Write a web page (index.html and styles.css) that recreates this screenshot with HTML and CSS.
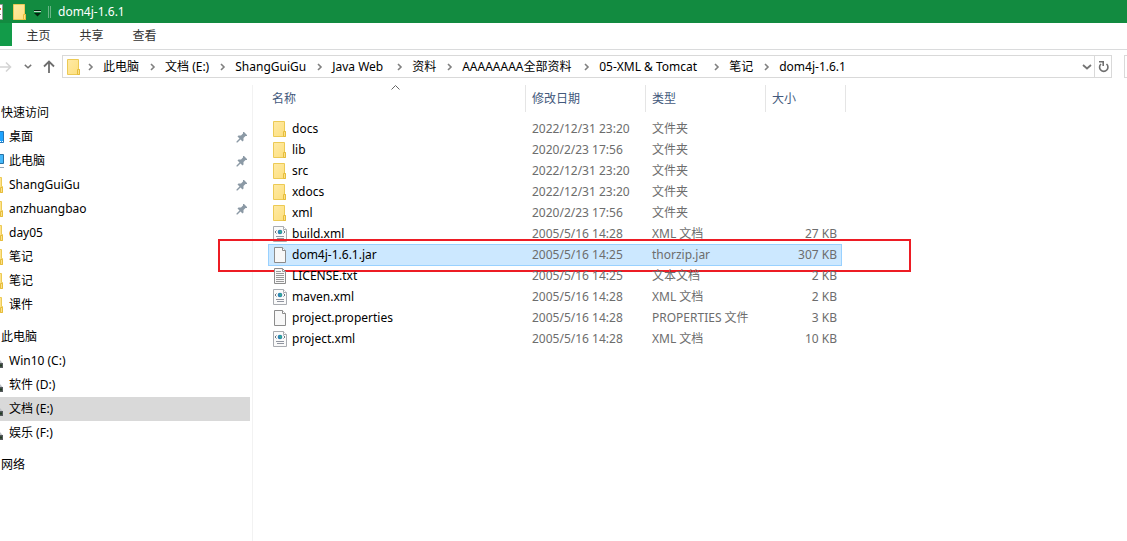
FILE: index.html
```html
<!DOCTYPE html>
<html lang="zh-CN">
<head>
<meta charset="utf-8">
<title>dom4j-1.6.1</title>
<link rel="stylesheet" href="styles.css">
</head>
<body>
<svg class="defs" aria-hidden="true">
  <defs>
    <linearGradient id="fold" x1="0" y1="0" x2="1" y2="1"><stop offset="0" stop-color="#ffeaa5"/><stop offset="1" stop-color="#fddf7d"/></linearGradient>
    <symbol id="folder" viewBox="0 0 16 16"><path d="M1.500.5h11v10h1v5h-12z" fill="url(#fold)" stroke="#ecca55"/><path d="M11.500 15.500v-5h2v5z" fill="#fbe08a" stroke="#e6bd3c"/></symbol>
    <symbol id="page" viewBox="0 0 16 16"><path d="M2.500.5h8l3 3v12h-11z" fill="#f8f8f8" stroke="#8c8c8c"/><path d="M10.500.5v3h3" fill="#fff" stroke="#8c8c8c"/></symbol>
    <symbol id="text" viewBox="0 0 16 16"><path d="M2.500.5h8l3 3v12h-11z" fill="#f8f8f8" stroke="#8c8c8c"/><path d="M10.500.5v3h3M4 3.500h5M4 5.500h8M4 7.500h8M4 9.500h8M4 11.500h8M4 13.500h8" fill="none" stroke="#999"/></symbol>
    <symbol id="xml" viewBox="0 0 16 16"><path d="M1.500.5h10l3 3v12h-13z" fill="#fafafa" stroke="#a8abb0"/><path d="M11.500.5v3h3" fill="#fff" stroke="#a8abb0"/><circle cx="8" cy="6" r="2.300" fill="#2b7fb5"/><path d="M7 5l2-.6.8 1.400L8.500 7.800z" fill="#35b08a"/><path d="M4.500 4.500L3 6l1.500 1.500M11.500 4.500L13 6l-1.500 1.500" fill="none" stroke="#6c7680"/><path d="M4 10.500h8M5 12.500h7" stroke="#9095a0"/></symbol>
    <symbol id="pin" viewBox="0 0 11 11"><path d="M7 0h1l3 3v1H9.500L7.500 6v2.500l-1 1L4.500 7.500 1.500 10.500H.5v-1L3.500 6.500l-2-2 1-1H5l2-2z" fill="#8b99a5"/></symbol>
    <symbol id="chev" viewBox="0 0 6 8"><path d="M1 1l3 3-3 3" fill="none" stroke="#808080" stroke-width="1.600"/></symbol>
    <symbol id="down" viewBox="0 0 10 6"><path d="M1 1l4 3.500L9 1" fill="none" stroke="#747474" stroke-width="1.800"/></symbol>
    <symbol id="s-desktop" viewBox="0 0 4 16"><path d="M-1 2.500h4.500v11H-1z" fill="#1ea3ff" stroke="#2477b8"/><path d="M0 12.500h1M2 12.500h1" stroke="#fff"/></symbol>
    <symbol id="s-computer" viewBox="0 0 4 16"><path d="M-1 1.500h4.500v9H-1z" fill="#45b8fa" stroke="#2873a6"/><path d="M0 14.500h4" stroke="#93a5b5"/></symbol>
    <symbol id="s-folder" viewBox="0 0 4 16"><path d="M-1 .5h2.500v9h1v6H-1z" fill="#fee28a" stroke="#ecca55"/><path d="M.5 15.500v-5h2v5z" fill="#fbe08a" stroke="#e6bd3c"/></symbol>
    <symbol id="s-drive" viewBox="0 0 4 16"><path d="M0 7l2.500 3H0z" fill="#bcc0c4"/><path d="M0 10h3v5H0z" fill="#55595d"/><path d="M0 12.500h2" stroke="#203c20" stroke-width="2"/></symbol>
  </defs>
</svg>

<header class="titlebar">
  <button class="props" aria-label="属性"><svg width="3" height="16" viewBox="13 0 3 16"><path d="M0 .5h15.500v15H0z" fill="#fff" stroke="#999"/><path d="M9 5h5" stroke="#e55b2b" stroke-width="2"/><path d="M9 10.500h5" stroke="#888"/></svg></button>
  <button class="newfolder" aria-label="新建文件夹"><svg width="16" height="16"><use href="#folder"/></svg></button>
  <button class="custom" aria-label="自定义"><svg width="7" height="7" viewBox="0 0 7 7"><path d="M0 .5h7" stroke="#04240f"/><path d="M0 3h7L3.500 6.500z" fill="#04240f"/><path d="M0 1.500h7" stroke="#b8dcc5"/></svg></button>
  <span class="sep"></span>
  <h1>dom4j-1.6.1</h1>
</header>

<nav class="ribbon">
  <button class="file" aria-label="文件"></button>
  <button>主页</button>
  <button>共享</button>
  <button>查看</button>
</nav>

<div class="navbar">
  <button class="fwd" aria-label="前进"><svg width="12" height="12" viewBox="0 0 12 12"><path d="M0 6h10M6 1.500L10.500 6 6 10.500" fill="none" stroke="#d4d4d4" stroke-width="1.600"/></svg></button>
  <button class="recent" aria-label="最近位置"><svg width="8" height="5" viewBox="0 0 10 6"><use href="#down"/></svg></button>
  <button class="up" aria-label="向上"><svg width="12" height="13" viewBox="0 0 12 13"><path d="M6 13V1.500M1 6.500l5-5 5 5" fill="none" stroke="#6e6e6e" stroke-width="1.800"/></svg></button>
  <div class="address">
    <svg class="lead" width="16" height="16"><use href="#folder"/></svg>
    <ol class="crumbs">
      <li><svg><use href="#chev"/></svg><a href="#">此电脑</a></li>
      <li><svg><use href="#chev"/></svg><a href="#">文档 (E:)</a></li>
      <li><svg><use href="#chev"/></svg><a href="#">ShangGuiGu</a></li>
      <li><svg><use href="#chev"/></svg><a class="w-s" href="#">Java Web</a></li>
      <li><svg><use href="#chev"/></svg><a href="#">资料</a></li>
      <li><svg><use href="#chev"/></svg><a class="w-l" href="#">AAAAAAAA全部资料</a></li>
      <li><svg><use href="#chev"/></svg><a class="w-m" href="#">05-XML &amp; Tomcat</a></li>
      <li><svg><use href="#chev"/></svg><a href="#">笔记</a></li>
      <li><svg><use href="#chev"/></svg><a href="#">dom4j-1.6.1</a></li>
    </ol>
    <button class="drop" aria-label="以前的位置"><svg width="10" height="6"><use href="#down"/></svg></button>
    <button class="refresh" aria-label="刷新"><svg width="11" height="12" viewBox="0 0 11 12"><path d="M8.500 3A4.200 4.200 0 1 1 3 3" fill="none" stroke="#6f6f6f" stroke-width="1.600"/><path d="M1 .8h4.200V5" fill="none" stroke="#6f6f6f" stroke-width="1.600"/></svg></button>
  </div>
  <input class="search" type="search" aria-label="搜索">
</div>

<div class="content">
  <aside class="sidebar">
    <section>
      <h2>快速访问</h2>
      <ul>
        <li><a href="#"><svg class="edge"><use href="#s-desktop"/></svg><span>桌面</span></a><svg class="pin"><use href="#pin"/></svg></li>
        <li><a href="#"><svg class="edge"><use href="#s-computer"/></svg><span>此电脑</span></a><svg class="pin"><use href="#pin"/></svg></li>
        <li><a href="#"><svg class="edge"><use href="#s-folder"/></svg><span>ShangGuiGu</span></a><svg class="pin"><use href="#pin"/></svg></li>
        <li><a href="#"><svg class="edge"><use href="#s-folder"/></svg><span>anzhuangbao</span></a><svg class="pin"><use href="#pin"/></svg></li>
        <li><a href="#"><svg class="edge"><use href="#s-folder"/></svg><span>day05</span></a></li>
        <li><a href="#"><svg class="edge"><use href="#s-folder"/></svg><span>笔记</span></a></li>
        <li><a href="#"><svg class="edge"><use href="#s-folder"/></svg><span>笔记</span></a></li>
        <li><a href="#"><svg class="edge"><use href="#s-folder"/></svg><span>课件</span></a></li>
      </ul>
    </section>
    <section>
      <h2>此电脑</h2>
      <ul>
        <li><a href="#"><svg class="edge"><use href="#s-drive"/></svg><span>Win10 (C:)</span></a></li>
        <li><a href="#"><svg class="edge"><use href="#s-drive"/></svg><span>软件 (D:)</span></a></li>
        <li class="current"><a href="#"><svg class="edge"><use href="#s-drive"/></svg><span>文档 (E:)</span></a></li>
        <li><a href="#"><svg class="edge"><use href="#s-drive"/></svg><span>娱乐 (F:)</span></a></li>
      </ul>
    </section>
    <section>
      <h2>网络</h2>
    </section>
  </aside>

  <main class="files">
    <table>
      <colgroup><col class="c-name"><col class="c-date"><col class="c-type"><col class="c-size"></colgroup>
      <thead>
        <tr><th>名称<svg class="sort" width="9" height="5" viewBox="0 0 9 5"><path d="M.5 4.500l4-4 4 4" fill="none" stroke="#666"/></svg></th><th>修改日期</th><th>类型</th><th>大小</th></tr>
      </thead>
      <tbody>
        <tr><td><svg><use href="#folder"/></svg>docs</td><td>2022/12/31 23:20</td><td>文件夹</td><td></td></tr>
        <tr><td><svg><use href="#folder"/></svg>lib</td><td>2020/2/23 17:56</td><td>文件夹</td><td></td></tr>
        <tr><td><svg><use href="#folder"/></svg>src</td><td>2022/12/31 23:20</td><td>文件夹</td><td></td></tr>
        <tr><td><svg><use href="#folder"/></svg>xdocs</td><td>2022/12/31 23:20</td><td>文件夹</td><td></td></tr>
        <tr><td><svg><use href="#folder"/></svg>xml</td><td>2020/2/23 17:56</td><td>文件夹</td><td></td></tr>
        <tr><td><svg><use href="#xml"/></svg>build.xml</td><td>2005/5/16 14:28</td><td>XML 文档</td><td>27 KB</td></tr>
        <tr class="selected"><td><svg><use href="#page"/></svg>dom4j-1.6.1.jar<span class="marker"></span></td><td>2005/5/16 14:25</td><td>thorzip.jar</td><td>307 KB</td></tr>
        <tr><td><svg><use href="#text"/></svg>LICENSE.txt</td><td>2005/5/16 14:25</td><td>文本文档</td><td>2 KB</td></tr>
        <tr><td><svg><use href="#xml"/></svg>maven.xml</td><td>2005/5/16 14:28</td><td>XML 文档</td><td>2 KB</td></tr>
        <tr><td><svg><use href="#page"/></svg>project.properties</td><td>2005/5/16 14:28</td><td>PROPERTIES 文件</td><td>3 KB</td></tr>
        <tr><td><svg><use href="#xml"/></svg>project.xml</td><td>2005/5/16 14:28</td><td>XML 文档</td><td>10 KB</td></tr>
      </tbody>
    </table>
  </main>
</div>
</body>
</html>
```
FILE: styles.css
```css
* { box-sizing: border-box; }
body {
  margin: 0;
  min-height: 100vh;
  display: flex;
  flex-direction: column;
  background: #fff;
  color: #000;
  font: 12px/20px "Noto Sans", "Noto Sans CJK SC", sans-serif;
}
button { margin: 0; padding: 0; border: 0; background: none; color: inherit; font: inherit; display: flex; align-items: center; justify-content: center; }
a { color: inherit; text-decoration: none; }
ul, ol { margin: 0; padding: 0; list-style: none; }
h1, h2 { margin: 0; font: inherit; }
svg { flex: none; }
.defs { position: absolute; width: 0; height: 0; }

.titlebar { display: flex; align-items: center; height: 23px; background: #128b40; color: #fff; }
.titlebar h1 { margin-left: 7px; }
.newfolder { margin-left: 9px; }
.custom { margin-left: 6px; padding-top: 3px; }
.sep { width: 3px; height: 12px; margin-left: 7px; border: solid #69b586; border-width: 0 1px; }

.ribbon { display: flex; height: 27px; border-bottom: 1px solid #dadbdc; color: #333; }
.ribbon button { width: 53px; height: 26px; }
.ribbon .file { width: 12px; height: 23px; background: #129b49; }

.navbar { display: flex; align-items: center; padding-top: 5px; height: 28px; }
.recent { margin-left: 12px; }
.up { margin-left: 11px; }
.address { flex: 1; display: flex; align-items: center; height: 23px; margin: 0 12px 0 7px; border: 1px solid #d9d9d9; overflow: hidden; }
.lead { margin-left: 3px; }
.crumbs { flex: 1; display: flex; margin-left: 6px; white-space: nowrap; }
.crumbs li { display: flex; align-items: center; }
.crumbs svg { width: 6px; height: 8px; margin-right: 9px; }
.crumbs a { margin-right: 11px; }
.crumbs .w-s { min-width: 54px; }
.crumbs .w-m { min-width: 104px; }
.crumbs .w-l { min-width: 111px; }
.drop { width: 14px; }
.refresh { width: 17px; height: 21px; border-left: 1px solid #d9d9d9; }
.search { width: 3px; height: 23px; padding: 0; border: 1px solid #d9d9d9; border-right: 0; background: #fff; font: inherit; }

.content { flex: 1; display: flex; padding-top: 7px; }
.sidebar { width: 253px; padding: 16px 2px 0 0; border-right: 1px solid #f2f2f2; }
.sidebar section { margin-bottom: 8px; }
.sidebar h2 { padding-left: 1px; line-height: 24px; }
.sidebar li { display: flex; align-items: center; justify-content: space-between; height: 24px; }
.sidebar li.current { background: #d9d9d9; }
.sidebar a { display: flex; align-items: center; gap: 5px; }
.edge { width: 4px; height: 16px; }
.pin { width: 11px; height: 11px; margin-right: 3px; }

.files { isolation: isolate; padding-left: 15px; }
table { width: 578px; table-layout: fixed; border-collapse: separate; border-spacing: 0; }
.c-name { width: 258px; }
.c-date, .c-type { width: 120px; }
th { position: relative; height: 27px; padding: 0 0 0 6px; border-right: 1px solid #e5e5e5; color: #43597c; font-weight: 400; text-align: left; }
th:first-child { padding-left: 4px; }
.sort { position: absolute; top: 0; left: 123px; }
thead::after { content: ""; display: block; height: 6px; }
td { height: 21px; padding: 0 0 0 6px; color: #6d6d6d; line-height: 21px; white-space: nowrap; }
td:first-child { display: flex; align-items: center; gap: 4px; padding-left: 4px; color: #000; }
td:last-child { padding: 0 9px 0 0; text-align: right; }
td svg { width: 16px; height: 16px; }
tr { position: relative; }
.selected::before { content: ""; position: absolute; inset: 0 4px -1px 0; z-index: -1; background: #cce8ff; border: 1px solid #99d1ff; }
.marker { position: absolute; top: -5px; left: -50px; width: 693px; height: 33px; border: 2px solid #ed1c24; pointer-events: none; }
```
